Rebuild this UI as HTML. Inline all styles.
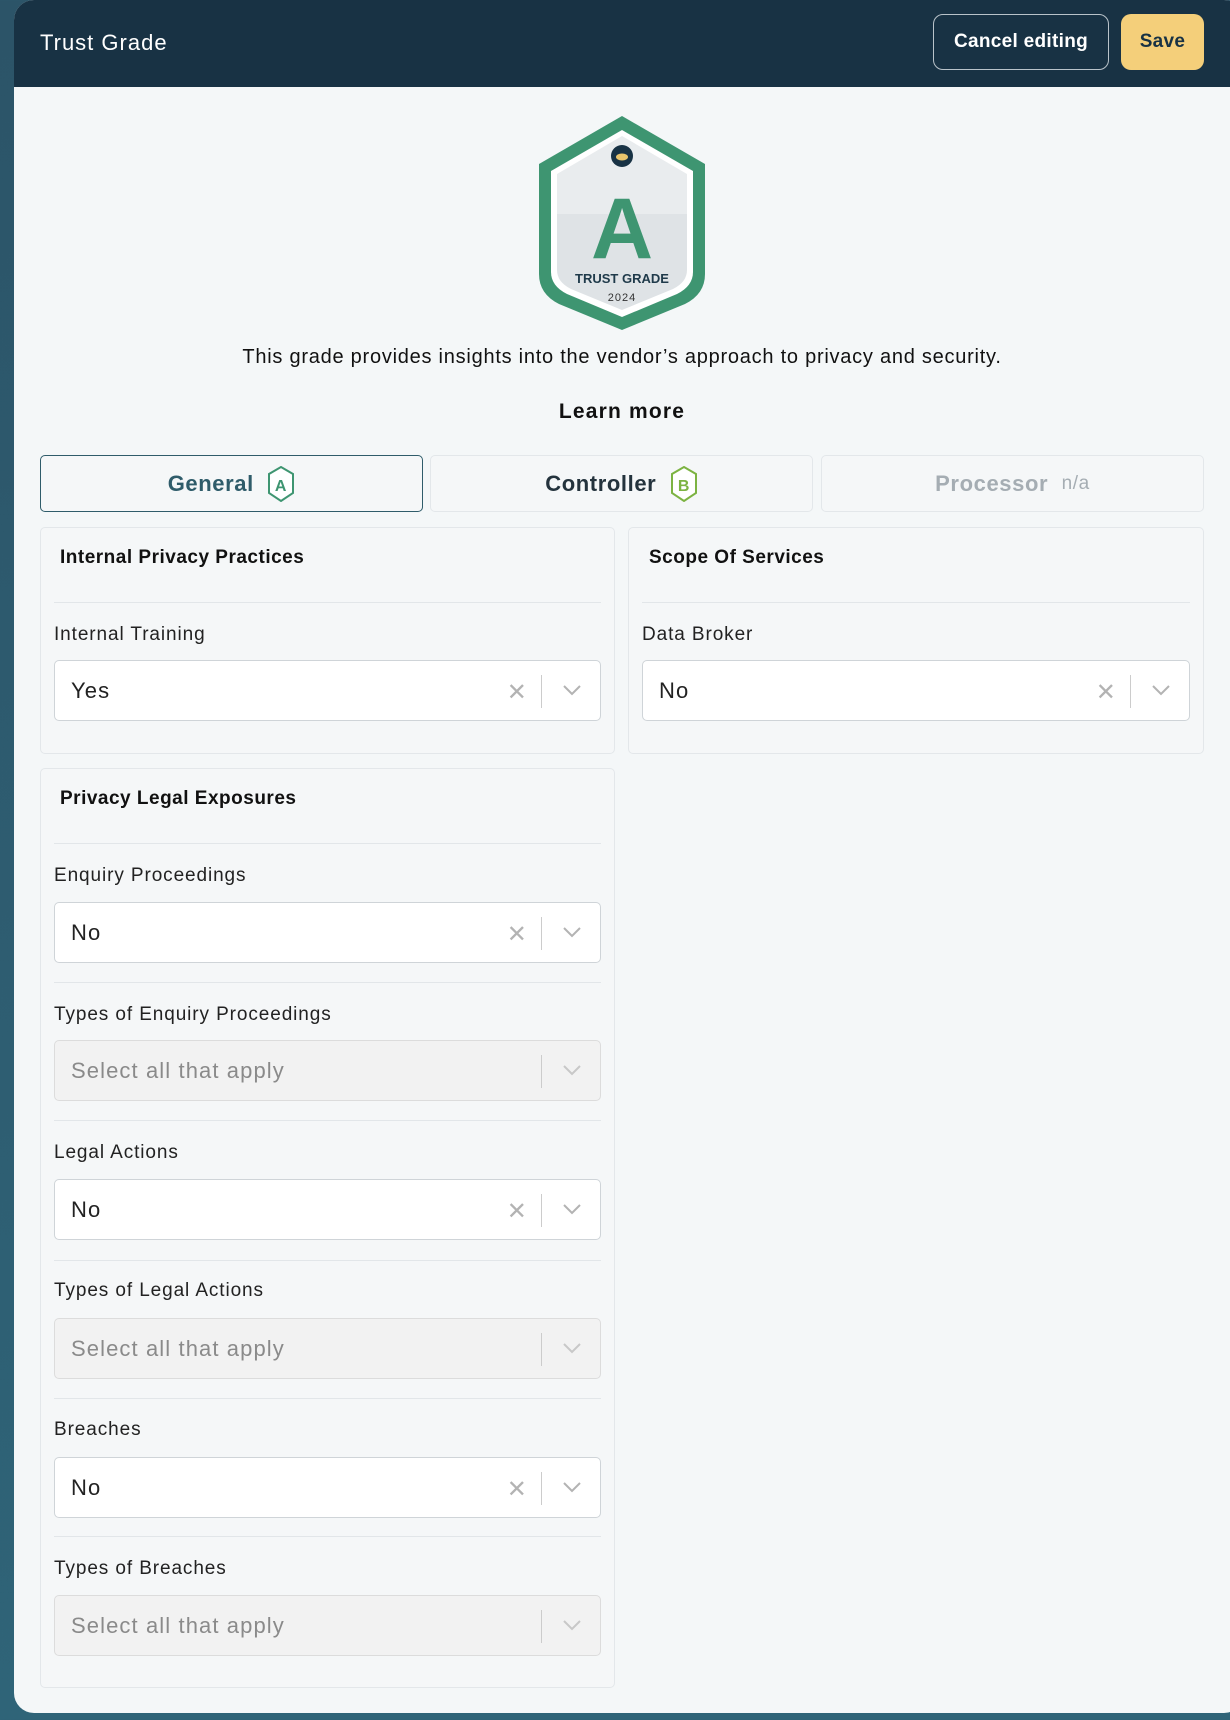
<!DOCTYPE html>
<html><head><meta charset="utf-8"><style>
*{box-sizing:border-box;margin:0;padding:0}
body{width:1230px;height:1720px;background:linear-gradient(180deg,#2c5468,#2f6478);font-family:"Liberation Sans",sans-serif;position:relative;overflow:hidden}
.card{position:absolute;left:14px;top:0;width:1230px;height:1713px;background:#f4f7f8;border-radius:20px;overflow:hidden}
.hdr{position:absolute;left:0;top:0;width:100%;height:87px;background:#183244}
.a{position:absolute}
.title{left:26px;top:30px;color:#fff;font-size:22px;letter-spacing:1px}
.btn{position:absolute;top:14px;height:56px;border-radius:10px;font-size:19px;font-weight:bold;display:flex;align-items:center;justify-content:center;letter-spacing:.3px}
.tab{position:absolute;top:455px;height:57px;border:1px solid #e3e7ea;border-radius:5px;background:#f5f7f8;display:flex;align-items:center;justify-content:center;font-size:22px;font-weight:bold;letter-spacing:.6px}
.panel{position:absolute;border:1px solid #e3e7ea;border-radius:5px;background:#f5f7f8}
.h{position:absolute;font-size:19px;font-weight:bold;color:#111;letter-spacing:.5px}
.div{position:absolute;height:1px;background:#e2e6e9}
.lbl{position:absolute;font-size:19px;color:#222;letter-spacing:.9px}
.sel{position:absolute;height:61px;border:1px solid #cfd4d8;border-radius:5px;background:#fff;font-size:22px;color:#222;padding-left:16px;display:flex;align-items:center;letter-spacing:1.1px}
.sel.dis{background:#f2f2f2;color:#8a8a8a;border-color:#dcdcdc}
.sel .x{position:absolute;right:72px;top:17px;color:#b3b3b3;font-size:24px}
.sel .sep{position:absolute;right:58px;top:14px;width:1px;height:33px;background:#ccc}
.sel .ch{position:absolute;right:18px;top:22px}
</style></head><body>
<div class="card">
<div class="hdr">
<div class="a title">Trust Grade</div>
<div class="btn" style="left:919px;width:176px;border:1px solid #b9c3ca;color:#fff">Cancel editing</div>
<div class="btn" style="left:1107px;width:83px;background:#f4cf7a;color:#183244">Save</div>
</div>
<svg class="a" style="left:521px;top:113px" width="174" height="220" viewBox="0 0 174 218">
<path d="M87 2 L170 50 L170 160 Q170 180 150 190 L87 216 L24 190 Q4 180 4 160 L4 50 Z" fill="#3e9571"/>
<path d="M87 16 L158 57 L158 158 Q158 172 142 180 L87 203 L32 180 Q16 172 16 158 L16 57 Z" fill="#fff"/>
<path d="M87 22 L152 60 L152 100 L22 100 L22 60 Z" fill="#e9ecee"/>
<path d="M22 100 L152 100 L152 156 Q152 168 138 175 L87 196 L36 175 Q22 168 22 156 Z" fill="#dfe3e6"/>
<circle cx="87" cy="42" r="11" fill="#183244"/><ellipse cx="87" cy="43" rx="6" ry="3.5" fill="#e8c46c"/>
<text x="87" y="144" text-anchor="middle" font-family="Liberation Sans" font-weight="bold" font-size="86" fill="#3e9571">A</text>
<text x="87" y="169" text-anchor="middle" font-family="Liberation Sans" font-weight="bold" font-size="13" fill="#1f3a4a">TRUST GRADE</text>
<text x="87" y="187" text-anchor="middle" font-family="Liberation Sans" font-size="11" fill="#333" letter-spacing="1">2024</text>
</svg>
<div class="a" style="left:0;width:1216px;top:346px;text-align:center;font-size:20px;letter-spacing:.75px;color:#111">This grade provides insights into the vendor’s approach to privacy and security.</div>
<div class="a" style="left:0;width:1216px;top:400px;text-align:center;font-size:21px;font-weight:bold;letter-spacing:1.2px;color:#111">Learn more</div>
<div class="tab" style="left:26px;width:383px;border:1.5px solid #2f5c6a;color:#2f5c6a">General&nbsp;&nbsp;<svg width="28" height="36" viewBox="0 0 28 36"><path d="M14 1 L26 8 L26 27 L14 35 L2 27 L2 8Z" fill="#fff" stroke="#3e9571" stroke-width="2"/><text x="14" y="25" text-anchor="middle" font-size="16" font-weight="bold" fill="#3e9571" font-family="Liberation Sans">A</text></svg></div>
<div class="tab" style="left:416px;width:383px;color:#24333d">Controller&nbsp;&nbsp;<svg width="28" height="36" viewBox="0 0 28 36"><path d="M14 1 L26 8 L26 27 L14 35 L2 27 L2 8Z" fill="#fff" stroke="#7cb342" stroke-width="2"/><text x="14" y="25" text-anchor="middle" font-size="16" font-weight="bold" fill="#7cb342" font-family="Liberation Sans">B</text></svg></div>
<div class="tab" style="left:807px;width:383px;color:#a5adb3">Processor&nbsp;&nbsp;<span style="font-weight:normal;font-size:19px">n/a</span></div>

<div class="panel" style="left:26px;top:527px;width:575px;height:227px"></div>
<div class="panel" style="left:614px;top:527px;width:576px;height:227px"></div>
<div class="panel" style="left:26px;top:768px;width:575px;height:920px"></div>

<div class="h" style="left:46px;top:547px">Internal Privacy Practices</div>
<div class="div" style="left:40px;top:602px;width:547px"></div>
<div class="lbl" style="left:40px;top:624px">Internal Training</div>
<div class="sel" style="left:40px;top:660px;width:547px">Yes<span class="x">✕</span><span class="sep"></span><svg class="ch" width="20" height="14"><path d="M2 3 L10 11 L18 3" fill="none" stroke="#b3b3b3" stroke-width="2"/></svg></div>

<div class="h" style="left:635px;top:547px">Scope Of Services</div>
<div class="div" style="left:628px;top:602px;width:548px"></div>
<div class="lbl" style="left:628px;top:624px">Data Broker</div>
<div class="sel" style="left:628px;top:660px;width:548px">No<span class="x">✕</span><span class="sep"></span><svg class="ch" width="20" height="14"><path d="M2 3 L10 11 L18 3" fill="none" stroke="#b3b3b3" stroke-width="2"/></svg></div>

<div class="h" style="left:46px;top:788px">Privacy Legal Exposures</div>
<div class="div" style="left:40px;top:843px;width:547px"></div>
<div class="lbl" style="left:40px;top:865px">Enquiry Proceedings</div>
<div class="sel" style="left:40px;top:902px;width:547px">No<span class="x">✕</span><span class="sep"></span><svg class="ch" width="20" height="14"><path d="M2 3 L10 11 L18 3" fill="none" stroke="#b3b3b3" stroke-width="2"/></svg></div>
<div class="div" style="left:40px;top:982px;width:547px"></div>
<div class="lbl" style="left:40px;top:1004px">Types of Enquiry Proceedings</div>
<div class="sel dis" style="left:40px;top:1040px;width:547px">Select all that apply<span class="sep"></span><svg class="ch" width="20" height="14"><path d="M2 3 L10 11 L18 3" fill="none" stroke="#c8c8c8" stroke-width="2"/></svg></div>
<div class="div" style="left:40px;top:1120px;width:547px"></div>
<div class="lbl" style="left:40px;top:1142px">Legal Actions</div>
<div class="sel" style="left:40px;top:1179px;width:547px">No<span class="x">✕</span><span class="sep"></span><svg class="ch" width="20" height="14"><path d="M2 3 L10 11 L18 3" fill="none" stroke="#b3b3b3" stroke-width="2"/></svg></div>
<div class="div" style="left:40px;top:1260px;width:547px"></div>
<div class="lbl" style="left:40px;top:1280px">Types of Legal Actions</div>
<div class="sel dis" style="left:40px;top:1318px;width:547px">Select all that apply<span class="sep"></span><svg class="ch" width="20" height="14"><path d="M2 3 L10 11 L18 3" fill="none" stroke="#c8c8c8" stroke-width="2"/></svg></div>
<div class="div" style="left:40px;top:1398px;width:547px"></div>
<div class="lbl" style="left:40px;top:1419px">Breaches</div>
<div class="sel" style="left:40px;top:1457px;width:547px">No<span class="x">✕</span><span class="sep"></span><svg class="ch" width="20" height="14"><path d="M2 3 L10 11 L18 3" fill="none" stroke="#b3b3b3" stroke-width="2"/></svg></div>
<div class="div" style="left:40px;top:1536px;width:547px"></div>
<div class="lbl" style="left:40px;top:1558px">Types of Breaches</div>
<div class="sel dis" style="left:40px;top:1595px;width:547px">Select all that apply<span class="sep"></span><svg class="ch" width="20" height="14"><path d="M2 3 L10 11 L18 3" fill="none" stroke="#c8c8c8" stroke-width="2"/></svg></div>
</div>
</body></html>
